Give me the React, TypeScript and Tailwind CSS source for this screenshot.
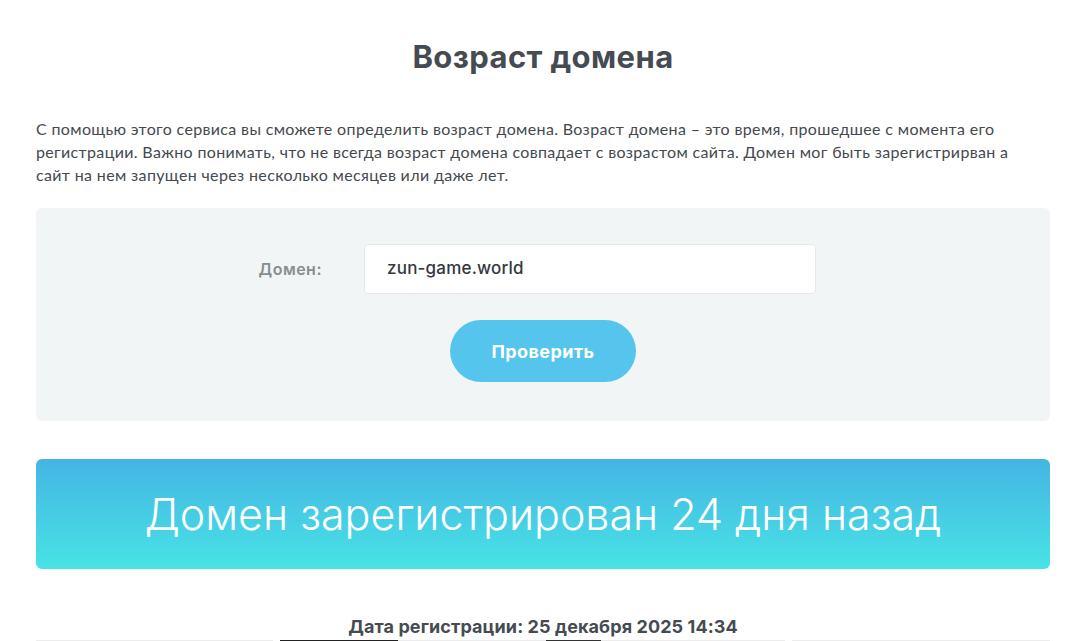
export default function App() {
  return (
    <div className="min-h-screen bg-white" style={{ fontFamily: "Lato, 'Noto Sans', sans-serif" }}>
      <div className="ml-[36px] w-[1014px] pt-[38px]">
        {/* Title */}
        <h1 className="text-center text-[31px] leading-[38px] font-bold text-[#464b52] font-['Inter',sans-serif] tracking-[0.4px]">
          Возраст домена
        </h1>

        {/* Description */}
        <p className="mt-[41px] text-[16px] leading-[23px] tracking-[0.35px] text-[#444950]">
          С помощью этого сервиса вы сможете определить возраст домена. Возраст домена – это время, прошедшее с момента его
          <br />
          регистрации. Важно понимать, что не всегда возраст домена совпадает с возрастом сайта. Домен мог быть зарегистрирван а
          <br />
          сайт на нем запущен через несколько месяцев или даже лет.
        </p>

        {/* Form */}
        <div className="mt-[22px] h-[213px] rounded-md bg-[#f2f5f6] pt-[36px]">
          <div className="flex items-center">
            <label className="w-[286px] text-right text-[16px] tracking-[0.5px] font-semibold text-[#8a8d90] font-['Inter',sans-serif]">
              Домен:
            </label>
            <div className="ml-[42px] flex h-[50px] w-[452px] items-center rounded-sm border border-[#e6e9ea] bg-white pl-[22px] text-[17px] tracking-[0.2px] font-medium text-[#34383d] font-['Inter',sans-serif]">
              zun-game.world
            </div>
          </div>
          <div className="mt-[26px] flex justify-center">
            <button className="h-[62px] w-[186px] rounded-full bg-[#55c5ee] text-[18px] tracking-[0.4px] font-bold text-white font-['Inter',sans-serif]">
              Проверить
            </button>
          </div>
        </div>

        {/* Result */}
        <div className="mt-[38px] flex h-[110px] items-center justify-center rounded-md bg-gradient-to-b from-[#45b5e4] to-[#48e3e4]">
          <span className="text-[43px] font-light text-white font-['Inter',sans-serif]">
            Домен зарегистрирован 24 дня назад
          </span>
        </div>

        <div className="mt-[46px] text-center text-[18px] tracking-[0.1px] font-bold leading-[24px] text-[#464b52] font-['Inter',sans-serif]">
          Дата регистрации: 25 декабря 2025 14:34
        </div>

        {/* Table top */}
        <div className="mt-[1px] flex gap-[7px]">
          <div className="h-px w-[237px] bg-[#ececec]" />
          <div className="flex h-px w-[505px] bg-[#ececec]">
            <div className="h-px w-[118px] bg-[#222]" />
            <div className="h-px w-[148px]" />
            <div className="h-px w-[55px] bg-[#333]" />
          </div>
          <div className="h-px w-[258px] bg-[#ececec]" />
        </div>
      </div>
    </div>
  );
}
